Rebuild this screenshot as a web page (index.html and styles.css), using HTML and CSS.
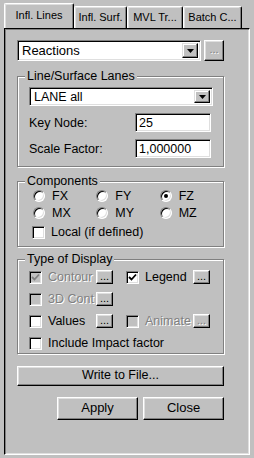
FILE: index.html
```html
<!DOCTYPE html>
<html lang="en">
<head>
    <meta charset="UTF-8">
    <meta name="viewport" content="width=device-width, initial-scale=1.0">
    <title>Influence Lines</title>
    <link rel="stylesheet" href="styles.css">
</head>
<body>
<div class="window">

    <!-- tab strip -->
    <div class="tabs">
        <div class="tab active">Infl. Lines</div>
        <div class="tab">Infl. Surf.</div>
        <div class="tab">MVL Tr...</div>
        <div class="tab">Batch C...</div>
    </div>

    <div class="panel">

        <div class="top-row">
            <div class="combo big">
                <span class="combo-text">Reactions</span>
                <div class="drop"><svg width="7" height="4" viewBox="0 0 7 4"><polygon points="0,0 7,0 3.5,4" fill="#000"/></svg></div>
            </div>
            <div class="btn dots-big disabled">...</div>
        </div>

        <!-- Line/Surface Lanes -->
        <div class="group lanes">
            <span class="legend">Line/Surface Lanes</span>
            <div class="combo small">
                <span class="combo-text">LANE all</span>
                <div class="drop"><svg width="7" height="4" viewBox="0 0 7 4"><polygon points="0,0 7,0 3.5,4" fill="#000"/></svg></div>
            </div>
            <div class="field-row">
                <span class="field-label">Key Node:</span>
                <div class="field">25</div>
            </div>
            <div class="field-row">
                <span class="field-label">Scale Factor:</span>
                <div class="field">1,000000</div>
            </div>
        </div>

        <!-- Components -->
        <div class="group components">
            <span class="legend">Components</span>
            <div class="radio-row">
                <div class="radio-item"><span class="radio"></span>FX</div>
                <div class="radio-item"><span class="radio"></span>FY</div>
                <div class="radio-item"><span class="radio on"></span>FZ</div>
            </div>
            <div class="radio-row">
                <div class="radio-item"><span class="radio"></span>MX</div>
                <div class="radio-item"><span class="radio"></span>MY</div>
                <div class="radio-item"><span class="radio"></span>MZ</div>
            </div>
            <div class="check-row local">
                <span class="check"></span>Local (if defined)
            </div>
        </div>

        <!-- Type of Display -->
        <div class="group display">
            <span class="legend">Type of Display</span>
            <div class="opt-row">
                <div class="opt">
                    <span class="check off"><svg width="9" height="9" viewBox="0 0 9 9"><polyline points="1,4 3.5,6.5 8,1.5" fill="none" stroke="#808080" stroke-width="1.8"/></svg></span>
                    <span class="opt-label disabled">Contour</span>
                    <div class="btn dots">...</div>
                </div>
                <div class="opt">
                    <span class="check"><svg width="9" height="9" viewBox="0 0 9 9"><polyline points="1,4 3.5,6.5 8,1.5" fill="none" stroke="#000" stroke-width="1.8"/></svg></span>
                    <span class="opt-label">Legend</span>
                    <div class="btn dots">...</div>
                </div>
            </div>
            <div class="opt-row">
                <div class="opt">
                    <span class="check off"></span>
                    <span class="opt-label disabled">3D Cont</span>
                    <div class="btn dots">...</div>
                </div>
            </div>
            <div class="opt-row">
                <div class="opt">
                    <span class="check"></span>
                    <span class="opt-label">Values</span>
                    <div class="btn dots">...</div>
                </div>
                <div class="opt">
                    <span class="check off"></span>
                    <span class="opt-label disabled">Animate</span>
                    <div class="btn dots disabled">...</div>
                </div>
            </div>
            <div class="opt-row last">
                <div class="opt">
                    <span class="check"></span>
                    <span class="opt-label">Include Impact factor</span>
                </div>
            </div>
        </div>

        <div class="btn write">Write to File...</div>

        <div class="actions">
            <div class="btn action">Apply</div>
            <div class="btn action">Close</div>
        </div>

    </div>
</div>
</body>
</html>
```

FILE: styles.css
```css
* {
    box-sizing: border-box;
}
body {
    margin: 0;
    font-family: "Liberation Sans", Arial, sans-serif;
    font-size: 12px;
    color: #000;
    background-color: #c0c0c0;
}
.window {
    width: 254px;
    height: 458px;
    background-color: #c0c0c0;
    overflow: hidden;
}

/* tabs */
.tabs {
    display: flex;
    align-items: flex-end;
    height: 28px;
    padding-left: 4px;
}
.tab {
    height: 22px;
    padding-top: 4px;
    font-size: 11px;
    text-align: center;
    border-top: 1px solid #fff;
    border-left: 1px solid #fff;
    border-right: 1px solid #000;
    border-radius: 2px 2px 0 0;
    box-shadow: inset -1px 0 #808080, inset 1px 1px #dfdfdf;
}
.tab.active {
    height: 25px;
    width: 70px;
    padding-top: 5px;
}
.tabs .tab:nth-child(2) { width: 53px; }
.tabs .tab:nth-child(3) { width: 56px; }
.tabs .tab:nth-child(4) { width: 59px; }

/* page area */
.panel {
    height: 427px;
    margin: 0 4px;
    padding: 11px 0 0 12px;
    border: 1px solid;
    border-color: #000 #fff #fff #000;
    box-shadow: inset 1px 1px #808080, inset -1px -1px #dfdfdf;
}

/* 3d helpers */
.btn {
    background-color: #c0c0c0;
    border: 1px solid;
    border-color: #fff #000 #000 #fff;
    box-shadow: inset -1px -1px #808080, inset 1px 1px #dfdfdf;
    text-align: center;
}
.disabled {
    color: #808080;
    text-shadow: 1px 1px 0 #fff;
}
.combo, .field, .check, .radio {
    background-color: #fff;
    border: 1px solid;
    border-color: #808080 #fff #fff #808080;
    box-shadow: inset 1px 1px #000, inset -1px -1px #dfdfdf;
}

/* combo boxes */
.top-row {
    display: flex;
    gap: 3px;
}
.combo {
    display: flex;
    align-items: center;
    justify-content: space-between;
    padding: 2px;
}
.combo-text {
    padding-left: 2px;
}
.combo.big {
    width: 184px;
    height: 21px;
    font-size: 13px;
}
.combo.small {
    width: 184px;
    height: 19px;
    font-size: 12.5px;
}
.drop {
    width: 16px;
    height: 100%;
    display: flex;
    align-items: center;
    justify-content: center;
    background-color: #c0c0c0;
    border: 1px solid;
    border-color: #dfdfdf #000 #000 #dfdfdf;
    box-shadow: inset -1px -1px #808080, inset 1px 1px #fff;
}
.dots-big {
    width: 20px;
    height: 21px;
    font-size: 11px;
    line-height: 17px;
}

/* group boxes */
.group {
    position: relative;
    width: 207px;
    border: 1px solid #808080;
    box-shadow: inset 1px 1px #fff, 1px 1px #fff;
}
.legend {
    position: absolute;
    top: -8px;
    left: 7px;
    padding: 0 2px;
    background-color: #c0c0c0;
    font-size: 12.5px;
    line-height: 14px;
}
.lanes {
    margin-top: 15px;
    padding: 10px 0 8px 11px;
}
.field-row {
    display: flex;
    align-items: center;
    margin-top: 7px;
    font-size: 12.5px;
}
.field-label {
    width: 106px;
}
.field {
    width: 76px;
    height: 19px;
    padding: 2px 3px;
    line-height: 14px;
}

.components {
    margin-top: 14px;
    padding: 6px 0 6px 15px;
}
.radio-row {
    display: flex;
    height: 16px;
    margin-bottom: 1px;
    font-size: 12.5px;
}
.radio-item {
    width: 70px;
    display: flex;
    align-items: center;
}
.radio {
    position: relative;
    width: 12px;
    height: 12px;
    margin-right: 7px;
    border-radius: 50%;
}
.radio.on::after {
    content: "";
    position: absolute;
    left: 3px;
    top: 3px;
    width: 4px;
    height: 4px;
    border-radius: 50%;
    background-color: #000;
}
.check-row {
    display: flex;
    align-items: center;
    height: 16px;
    font-size: 12.5px;
}
.local {
    margin-top: 3px;
    margin-left: -1px;
}
.check {
    display: flex;
    align-items: center;
    justify-content: center;
    width: 13px;
    height: 13px;
    margin-right: 6px;
    flex-shrink: 0;
}
.check.off {
    background-color: #c0c0c0;
}

.display {
    margin-top: 12px;
    padding: 9px 0 2px 11px;
}
.opt-row {
    display: flex;
    height: 16px;
    margin-bottom: 6px;
    font-size: 12.5px;
}
.opt-row.last {
    margin-top: 2px;
    margin-bottom: 0;
}
.opt {
    display: flex;
    align-items: center;
    width: 99px;
}
.opt-label {
    width: 48px;
    white-space: nowrap;
}
.opt-row.last .opt {
    width: auto;
}
.opt-row.last .opt-label {
    width: auto;
}
.dots {
    width: 17px;
    height: 14px;
    font-size: 11px;
    line-height: 10px;
}

/* bottom buttons */
.write {
    width: 207px;
    height: 20px;
    margin-top: 12px;
    font-size: 12.5px;
    line-height: 17px;
}
.actions {
    display: flex;
    justify-content: flex-end;
    gap: 5px;
    width: 207px;
    margin-top: 11px;
}
.action {
    width: 81px;
    height: 23px;
    font-size: 13px;
    line-height: 20px;
}
```
